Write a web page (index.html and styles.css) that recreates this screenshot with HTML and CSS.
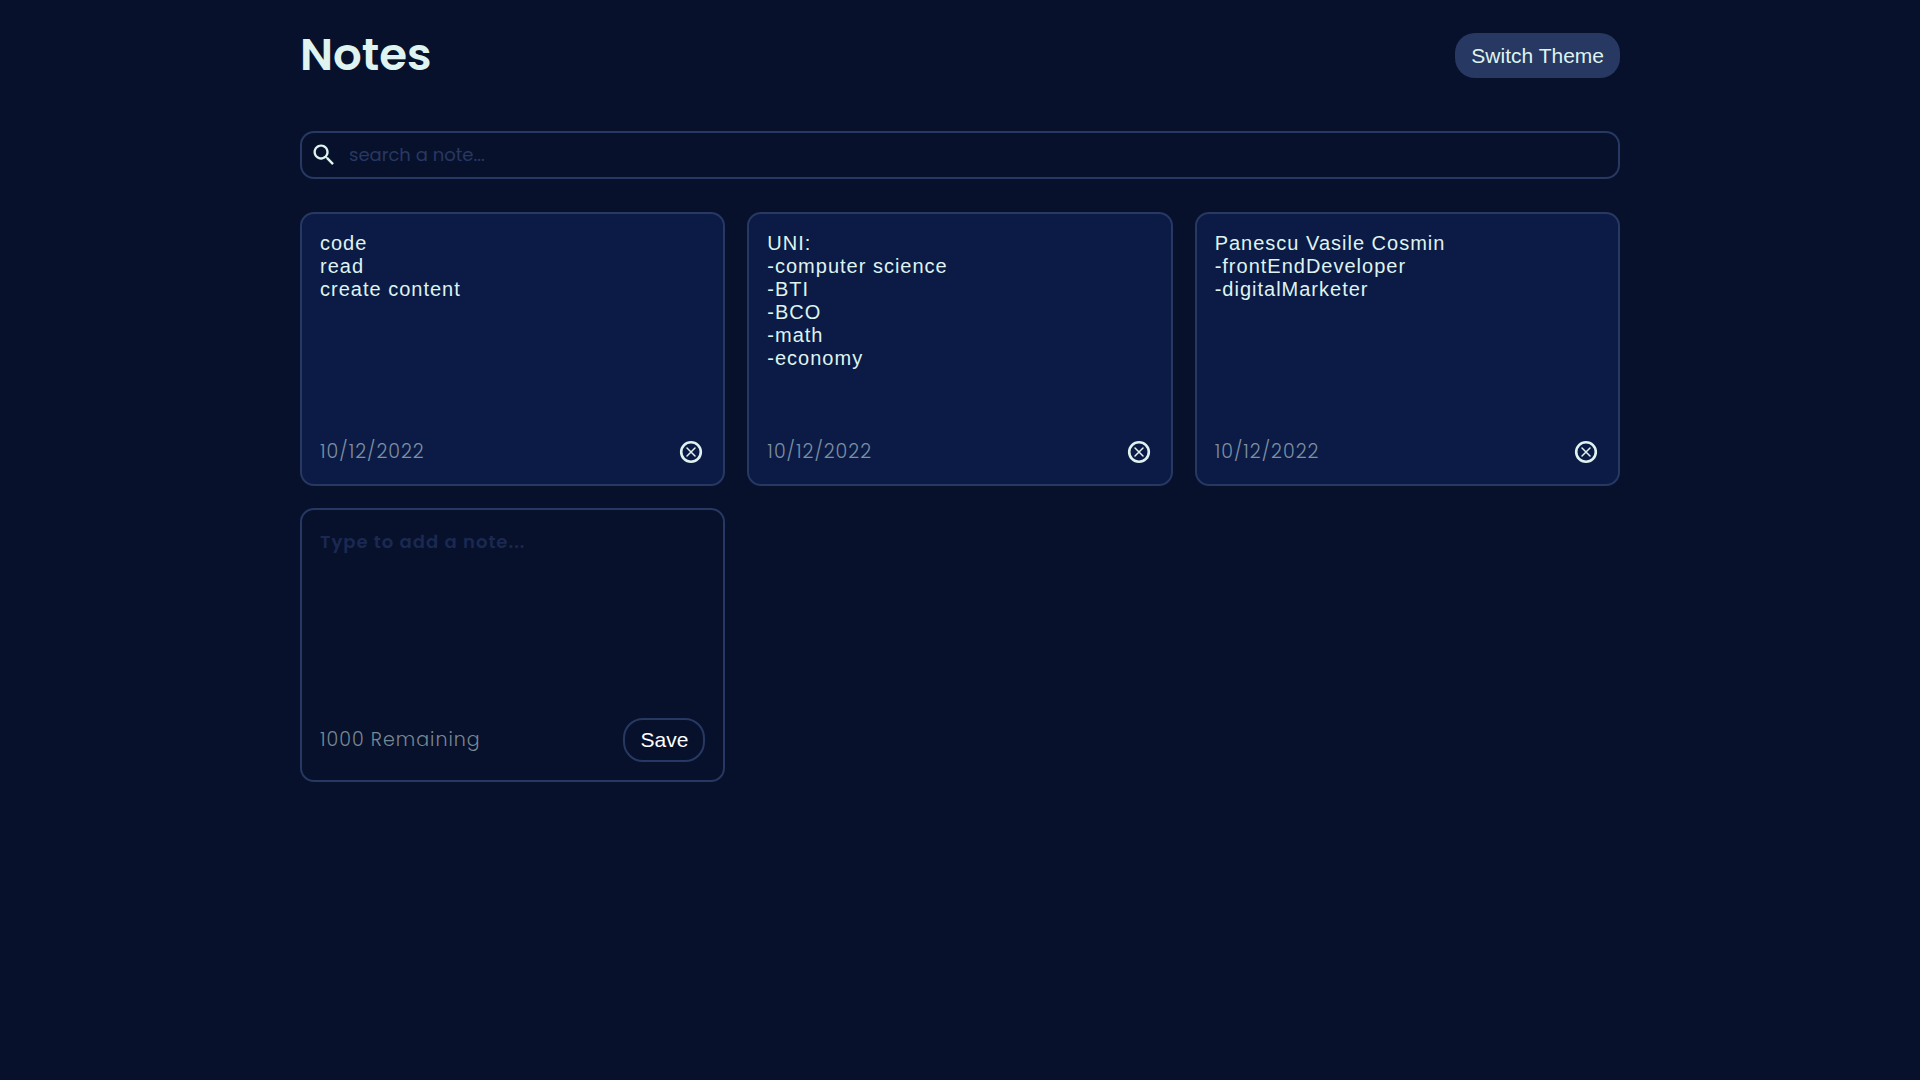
FILE: index.html
```html
<!DOCTYPE html>
<html lang="en">
<head>
<meta charset="utf-8">
<meta name="viewport" content="width=device-width, initial-scale=1">
<title>Notes</title>
<link rel="stylesheet" href="styles.css">
</head>
<body>
<svg class="sprite" aria-hidden="true">
  <symbol id="icon-remove" viewBox="0 0 24 24">
    <circle cx="12" cy="12" r="9.8" fill="none" stroke="currentColor" stroke-width="2.6"/>
    <path d="M8 8l8 8M16 8l-8 8" fill="none" stroke="currentColor" stroke-width="1.5" stroke-linecap="round"/>
  </symbol>
</svg>
<div class="container">
  <header class="header">
    <h1 class="title">Notes</h1>
    <button class="theme-button" type="button">Switch Theme</button>
  </header>
  <main>
    <label class="search">
      <svg class="search-icon" viewBox="0 0 24 24" aria-hidden="true"><path fill="currentColor" d="M15.5 14h-.79l-.28-.27C15.41 12.59 16 11.11 16 9.5 16 5.91 13.09 3 9.5 3S3 5.91 3 9.5 5.91 16 9.5 16c1.61 0 3.09-.59 4.23-1.57l.27.28v.79l5 4.99L20.49 19l-4.99-5zm-6 0C7.01 14 5 11.99 5 9.5S7.01 5 9.5 5 14 7.01 14 9.5 11.99 14 9.5 14z"/></svg>
      <input class="search-input" type="text" placeholder="search a note..." aria-label="Search a note">
    </label>
    <section class="notes">
      <article class="note">
        <p class="note-text">code
read
create content</p>
        <footer class="note-footer">
          <small class="note-meta">10/12/2022</small>
          <button class="remove-button" type="button" aria-label="Delete note"><svg class="remove-icon"><use href="#icon-remove"/></svg></button>
        </footer>
      </article>
      <article class="note">
        <p class="note-text">UNI:
-computer science
-BTI
-BCO
-math
-economy</p>
        <footer class="note-footer">
          <small class="note-meta">10/12/2022</small>
          <button class="remove-button" type="button" aria-label="Delete note"><svg class="remove-icon"><use href="#icon-remove"/></svg></button>
        </footer>
      </article>
      <article class="note">
        <p class="note-text">Panescu Vasile Cosmin
-frontEndDeveloper
-digitalMarketer</p>
        <footer class="note-footer">
          <small class="note-meta">10/12/2022</small>
          <button class="remove-button" type="button" aria-label="Delete note"><svg class="remove-icon"><use href="#icon-remove"/></svg></button>
        </footer>
      </article>
      <form class="note note-new">
        <textarea class="note-input" placeholder="Type to add a note..." aria-label="New note" maxlength="1000"></textarea>
        <footer class="note-footer">
          <small class="note-meta">1000 Remaining</small>
          <button class="save-button" type="button">Save</button>
        </footer>
      </form>
    </section>
  </main>
</div>
</body>
</html>
```
FILE: styles.css
```css
:root {
  --bg: #07112c;
  --card: #0c1b46;
  --line: #273863;
  --text: #dff3f0;
  --muted: #7d90a2;
  --muted-new: #788893;
  --display: Poppins, Inter, sans-serif;
  --plain: "Liberation Sans", Arial, sans-serif;
}

* {
  box-sizing: border-box;
  margin: 0;
  padding: 0;
}

body {
  min-height: 100vh;
  background: var(--bg);
  color: var(--text);
  font-family: var(--display);
}

.sprite {
  display: none;
}

.container {
  max-width: 1360px;
  margin: 0 auto;
  padding: 19px 20px 40px;
}

.header {
  display: flex;
  align-items: center;
  justify-content: space-between;
  margin-bottom: 40px;
}

.title {
  font-size: 45px;
  line-height: 72px;
  font-weight: 600;
}

.theme-button {
  padding: 11px 16px;
  border: 0;
  border-radius: 20px;
  background: var(--line);
  color: var(--text);
  font: 21px/23px var(--plain);
}

.search {
  display: flex;
  align-items: center;
  gap: 11px;
  height: 48px;
  padding: 0 10px 0 8px;
  border: 2px solid var(--line);
  border-radius: 14px;
}

.search-icon {
  flex: none;
  width: 28px;
  height: 28px;
}

.search-input {
  flex: 1;
  min-width: 0;
  border: 0;
  outline: 0;
  background: transparent;
  color: var(--text);
  font: 400 18px/28px var(--display);
}

.search-input::placeholder {
  color: var(--line);
  opacity: 1;
}

.notes {
  display: grid;
  grid-template-columns: repeat(auto-fill, minmax(320px, 1fr));
  gap: 22px;
  margin-top: 33px;
}

.note {
  display: flex;
  flex-direction: column;
  justify-content: space-between;
  min-height: 274px;
  padding: 18px;
  border: 2px solid var(--line);
  border-radius: 14px;
  background: var(--card);
  letter-spacing: 1px;
}

.note-new {
  background: transparent;
}

.note-text {
  font: 20px/23px var(--plain);
  white-space: pre-line;
}

.note-input {
  flex: 1;
  width: 100%;
  border: 0;
  outline: 0;
  resize: none;
  background: transparent;
  color: var(--text);
  font: 600 18px/28px var(--display);
  letter-spacing: 1px;
}

.note-input::placeholder {
  color: #1b2952;
  opacity: 1;
}

.note-footer {
  display: flex;
  align-items: center;
  justify-content: space-between;
}

.note-meta {
  color: var(--muted);
  font-size: 19px;
  line-height: 28px;
  font-weight: 300;
}

.note-new .note-meta {
  color: var(--muted-new);
}

.remove-button {
  display: flex;
  padding: 2px;
  border: 0;
  background: transparent;
  color: var(--text);
}

.remove-icon {
  width: 24px;
  height: 24px;
}

.save-button {
  padding: 9px 15px;
  border: 2px solid var(--line);
  border-radius: 20px;
  background: transparent;
  color: #fff;
  font: 21px/22px var(--plain);
}
```
